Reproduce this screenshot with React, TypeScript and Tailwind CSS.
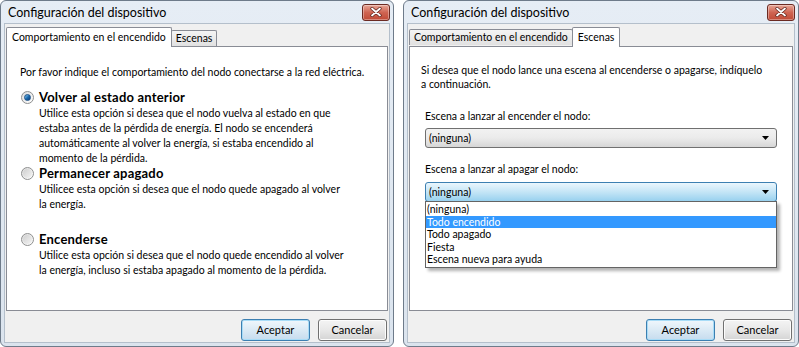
import React from 'react';

const font = { fontFamily: 'Lato, "Noto Sans", sans-serif' };

function CloseButton() {
    return (
        <div className="w-[28px] h-[17px] rounded-[3px] border border-[#6b2a22] bg-gradient-to-b from-[#e6a596] via-[#cf6452] to-[#c04a36] flex items-center justify-center shadow-[inset_0_0_0_1px_rgba(255,255,255,0.35)]">
            <svg width="12" height="10" viewBox="0 0 12 10">
                <path d="M2 1.5 L10 8.5 M10 1.5 L2 8.5" stroke="#5a1f18" strokeWidth="3.2" strokeLinecap="round" />
                <path d="M2 1.5 L10 8.5 M10 1.5 L2 8.5" stroke="#ffffff" strokeWidth="1.8" strokeLinecap="round" />
            </svg>
        </div>
    );
}

function WinButton({ label, isDefault }: { label: string; isDefault?: boolean }) {
    return (
        <div
            className={
                isDefault
                    ? 'w-[69px] h-[22px] rounded-[3px] border border-[#3c7fb1] bg-gradient-to-b from-[#f0f7fc] via-[#dbeaf5] to-[#c6dcee] shadow-[inset_0_0_0_1px_#a8dcf7] flex items-center justify-center text-[11px] text-black'
                    : 'w-[69px] h-[22px] rounded-[3px] border border-[#707070] bg-gradient-to-b from-[#f4f4f4] via-[#e8e8e8] to-[#d4d4d4] shadow-[inset_0_0_0_1px_#fcfcfc] flex items-center justify-center text-[11px] text-black'
            }
        >
            {label}
        </div>
    );
}

function Radio({ checked }: { checked?: boolean }) {
    return (
        <div className="w-[13px] h-[13px] rounded-full border border-[#8e8f8f] bg-gradient-to-br from-[#dcdcdc] to-[#ffffff] flex items-center justify-center shrink-0">
            {checked ? (
                <div className="w-[7px] h-[7px] rounded-full bg-gradient-to-br from-[#8ad2f6] via-[#1c6cb0] to-[#0b3a75] border border-[#1a4f86]" />
            ) : (
                <div className="w-[9px] h-[9px] rounded-full bg-gradient-to-br from-[#cfcfcf] to-[#f4f4f4]" />
            )}
        </div>
    );
}

function ArrowDown() {
    return (
        <svg width="7" height="4" viewBox="0 0 7 4">
            <path d="M0 0 L7 0 L3.5 4 Z" fill="#000" />
        </svg>
    );
}

function Window({ children, activeTab }: { children: React.ReactNode; activeTab: 0 | 1 }) {
    const activeCls =
        'h-[20px] px-[5px] bg-white border border-b-0 border-[#898c95] rounded-t-[2px] flex items-center relative z-10 -mb-px';
    const inactiveCls =
        'h-[16px] px-[4px] bg-gradient-to-b from-[#f4f4f4] to-[#e1e1e1] border border-b-0 border-[#898c95] rounded-t-[2px] flex items-center';
    return (
        <div className="h-[347px] flex flex-col rounded-[6px] border border-[#6e7b8a] bg-gradient-to-b from-[#e6edf5] to-[#dbe4ee]">
            <div className="h-[22px] flex items-center justify-between pl-[7px] pr-[3px] shrink-0">
                <span className="text-[12.5px] text-black pt-[3px]">Configuración del dispositivo</span>
                <CloseButton />
            </div>
            <div className="flex-1 mx-[3px] mb-[3px] border border-[#b4bfcb] bg-[#f0f0f0] flex flex-col px-[1px]">
                <div className="flex items-end pt-[3px] text-[10.5px] text-black whitespace-nowrap">
                    {activeTab === 0 ? (
                        <>
                            <div className={activeCls}>Comportamiento en el encendido</div>
                            <div className={inactiveCls + ' -ml-px'}>Escenas</div>
                        </>
                    ) : (
                        <>
                            <div className={inactiveCls + ' mb-px'}>Comportamiento en el encendido</div>
                            <div className={activeCls + ' -ml-px'}>Escenas</div>
                        </>
                    )}
                </div>
                <div className="h-[265px] bg-white border border-[#898c95] relative">{children}</div>
                <div className="flex-1 flex items-start pt-[8px] justify-end gap-[8px] pr-[1px]">
                    <WinButton label="Aceptar" isDefault />
                    <WinButton label="Cancelar" />
                </div>
            </div>
        </div>
    );
}

function Option({
    title,
    lines,
    checked,
}: {
    title: string;
    lines: string[];
    checked?: boolean;
}) {
    return (
        <div>
            <div className="flex items-center gap-[5px] h-[14px]">
                <Radio checked={checked} />
                <span className="font-bold text-[13px] tracking-[0.2px]">{title}</span>
            </div>
            <div className="pl-[18px] pt-[2px]">
                {lines.map((l) => (
                    <div key={l}>{l}</div>
                ))}
            </div>
        </div>
    );
}

function PowerTab() {
    return (
        <div className="pt-[18px] pl-[13px] text-[10.5px] leading-[15px] text-black whitespace-nowrap">
            <div>Por favor indique el comportamiento del nodo conectarse a la red eléctrica.</div>
            <div className="pt-[10px] pl-[1px] flex flex-col">
                <Option
                    checked
                    title="Volver al estado anterior"
                    lines={[
                        'Utilice esta opción si desea que el nodo vuelva al estado en que',
                        'estaba antes de la pérdida de energía. El nodo se encenderá',
                        'automáticamente al volver la energía, si estaba encendido al',
                        'momento de la pérdida.',
                    ]}
                />
                <Option
                    title="Permanecer apagado"
                    lines={['Utilicee esta opción si desea que el nodo quede apagado al volver', 'la energía.']}
                />
                <div className="h-[20px]" />
                <Option
                    title="Encenderse"
                    lines={[
                        'Utilice esta opción si desea que el nodo quede encendido al volver',
                        'la energía, incluso si estaba apagado al momento de la pérdida.',
                    ]}
                />
            </div>
        </div>
    );
}

const scenes = ['(ninguna)', 'Todo encendido', 'Todo apagado', 'Fiesta', 'Escena nueva para ayuda'];

function ScenesTab() {
    return (
        <div className="pt-[16px] pl-[11px] pr-[15px] text-[10.5px] leading-[14px] text-black whitespace-nowrap">
            <div>Si desea que el nodo lance una escena al encenderse o apagarse, indíquelo</div>
            <div>a continuación.</div>
            <div className="pl-[4px]">
                <div className="pt-[18px]">Escena a lanzar al encender el nodo:</div>
                <div className="mt-[5px] h-[20px] rounded-[3px] border border-[#707070] bg-gradient-to-b from-[#f2f2f2] via-[#ebebeb] to-[#d6d6d6] flex items-center justify-between pl-[3px] pr-[7px]">
                    <span>(ninguna)</span>
                    <ArrowDown />
                </div>
                <div className="pt-[14px]">Escena a lanzar al apagar el nodo:</div>
                <div className="relative mt-[6px]">
                    <div className="h-[20px] rounded-[3px] border border-[#3c7fb1] bg-gradient-to-b from-[#eaf6fd] via-[#c4e5f6] to-[#98d1ef] flex items-center justify-between pl-[3px] pr-[7px]">
                        <span>(ninguna)</span>
                        <ArrowDown />
                    </div>
                    <div className="absolute left-0 right-0 top-[19px] bg-white border border-[#646464] shadow-[3px_3px_3px_rgba(0,0,0,0.3)] py-[1px] z-20 leading-[12.6px]">
                        {scenes.map((s, i) => (
                            <div
                                key={s}
                                className={i === 1 ? 'bg-[#3399ff] text-white pl-[1px]' : 'pl-[1px]'}
                            >
                                {s}
                            </div>
                        ))}
                    </div>
                </div>
            </div>
        </div>
    );
}

export default function App() {
    return (
        <div className="w-[799px] h-[347px] bg-white flex gap-[9px] overflow-hidden" style={font}>
            <div className="w-[394px] shrink-0">
                <Window activeTab={0}>
                    <PowerTab />
                </Window>
            </div>
            <div className="w-[396px] shrink-0">
                <Window activeTab={1}>
                    <ScenesTab />
                </Window>
            </div>
        </div>
    );
}
